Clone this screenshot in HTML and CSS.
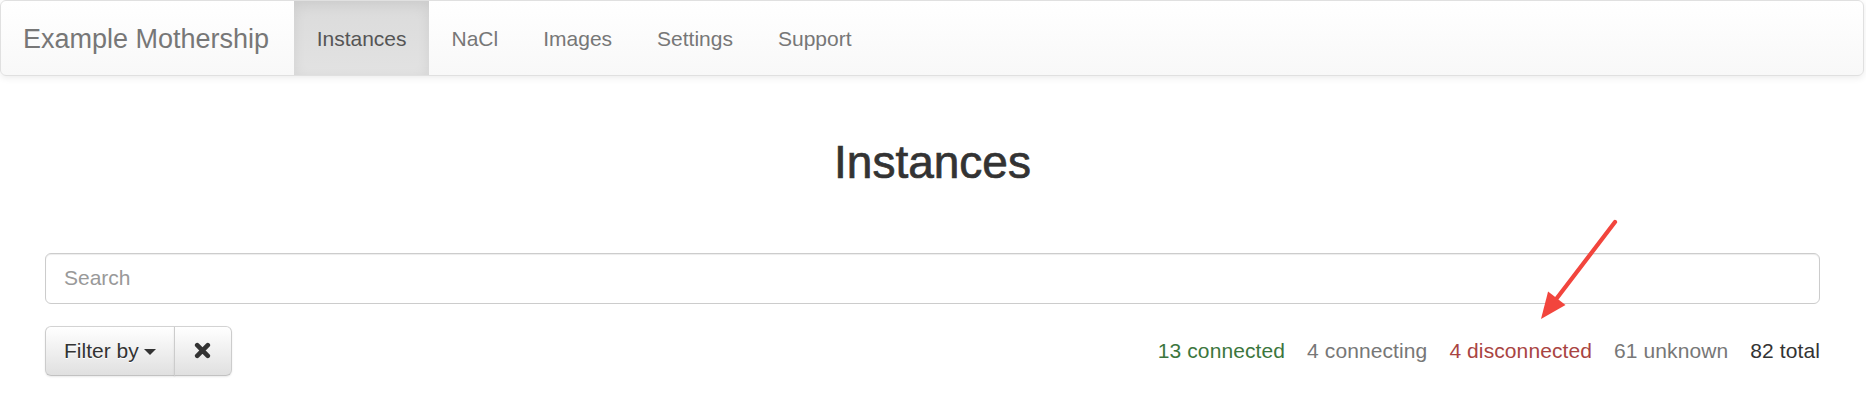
FILE: index.html
```html
<!DOCTYPE html>
<html>
<head>
<meta charset="utf-8">
<link rel="stylesheet" href="styles.css">
</head>
<body>
<nav class="navbar">
  <a class="brand">Example Mothership</a>
  <ul class="nav">
    <li class="active"><a>Instances</a></li>
    <li><a>NaCl</a></li>
    <li><a>Images</a></li>
    <li><a>Settings</a></li>
    <li><a>Support</a></li>
  </ul>
</nav>
<main class="container">
  <h2 class="title">Instances</h2>
  <input class="search" type="text" placeholder="Search">
  <div class="toolbar">
    <div class="btn-group">
      <button class="btn">Filter by <span class="caret"></span></button>
      <button class="btn btn-icon" aria-label="Clear">
        <svg width="17" height="17" viewBox="0 0 17 17"><path d="M3.2 3.2 L13.8 13.8 M13.8 3.2 L3.2 13.8" stroke="#333" stroke-width="4.6" stroke-linecap="round"/></svg>
      </button>
    </div>
    <div class="counts">
      <span class="c-success">13 connected</span>
      <span class="c-muted">4 connecting</span>
      <span class="c-danger">4 disconnected</span>
      <span class="c-muted">61 unknown</span>
      <span class="c-total">82 total</span>
    </div>
  </div>
  <hr class="rule">
</main>
<svg class="arrow" width="110" height="120" viewBox="0 0 110 120">
  <line x1="95" y1="12" x2="36.8" y2="88.3" stroke="#f2453d" stroke-width="4.2" stroke-linecap="round"/>
  <polygon points="21,109 45.5,95 28.1,81.6" fill="#f2453d"/>
</svg>
</body>
</html>
```

FILE: styles.css
```css
html, body {
  margin: 0;
  padding: 0;
  background: #fff;
}
body {
  font-family: "Liberation Sans", Arial, sans-serif;
  font-size: 21px;
  color: #333;
  position: relative;
  width: 1866px;
  height: 397px;
  overflow: hidden;
}
.navbar {
  display: flex;
  align-items: stretch;
  height: 74px;
  width: 1862px;
  border: 1px solid #e0e0e0;
  border-radius: 6px;
  background: linear-gradient(to bottom, #ffffff 0%, #f8f8f8 100%);
  box-shadow: inset 0 1px 0 rgba(255,255,255,.15), 0 2px 7px rgba(0,0,0,.08);
}
.brand {
  display: block;
  padding: 23px 25px 21px 22px;
  font-size: 27px;
  line-height: 30px;
  color: #777;
}
.nav {
  display: flex;
  list-style: none;
  margin: 0;
  padding: 0;
}
.nav li a {
  display: block;
  padding: 23px 22.5px 21px;
  line-height: 30px;
  font-size: 21px;
  color: #777;
}
.nav li.active a {
  color: #555;
  background: linear-gradient(to bottom, #dbdbdb 0%, #e2e2e2 100%);
  box-shadow: inset 0 4px 13px rgba(0,0,0,.075);
}
.container {
  padding: 0 46px 0 45px;
}
.title {
  margin: 62px 0 0;
  text-align: center;
  font-size: 46px;
  line-height: 49.5px;
  font-weight: normal;
  color: #333;
  -webkit-text-stroke: 0.7px #333;
}
.search {
  display: block;
  box-sizing: border-box;
  width: 100%;
  height: 51px;
  margin-top: 65px;
  padding: 0 18px;
  font-family: "Liberation Sans", Arial, sans-serif;
  font-size: 21px;
  color: #555;
  border: 1px solid #ccc;
  border-radius: 6px;
  box-shadow: inset 0 1px 1px rgba(0,0,0,.075);
  outline: none;
}
.search::placeholder {
  color: #999;
}
.toolbar {
  display: flex;
  align-items: center;
  justify-content: space-between;
  margin-top: 22px;
}
.btn-group {
  display: flex;
}
.btn {
  box-sizing: border-box;
  height: 50px;
  padding: 0 18px;
  font-family: "Liberation Sans", Arial, sans-serif;
  font-size: 21px;
  color: #333;
  background: linear-gradient(to bottom, #ffffff 0%, #e0e0e0 100%);
  border: 1px solid #ccc;
  border-color: #d3d3d3 #ccc #c2c2c2;
  text-shadow: 0 1px 0 #fff;
  box-shadow: inset 0 1px 0 rgba(255,255,255,.15), 0 1px 2px rgba(0,0,0,.09);
  display: flex;
  align-items: center;
}
.btn:first-child {
  border-radius: 6px 0 0 6px;
}
.btn + .btn {
  margin-left: -1px;
  border-radius: 0 6px 6px 0;
}
.btn-icon {
  width: 58px;
  justify-content: center;
}
.caret {
  display: inline-block;
  width: 0;
  height: 0;
  margin-left: 5px;
  margin-top: 2px;
  border-top: 6px solid #333;
  border-left: 6px solid transparent;
  border-right: 6px solid transparent;
}
.counts {
  display: flex;
  gap: 22px;
  font-size: 21px;
  line-height: 30px;
  letter-spacing: 0.1px;
}
.c-success { color: #3c763d; }
.c-muted { color: #777; }
.c-danger { color: #a94442; }
.c-total { color: #333; }
.rule {
  margin: 21px 0 0;
  border: 0;
  border-top: 1px solid #e6e6e6;
}
.arrow {
  position: absolute;
  left: 1520px;
  top: 210px;
}
```
